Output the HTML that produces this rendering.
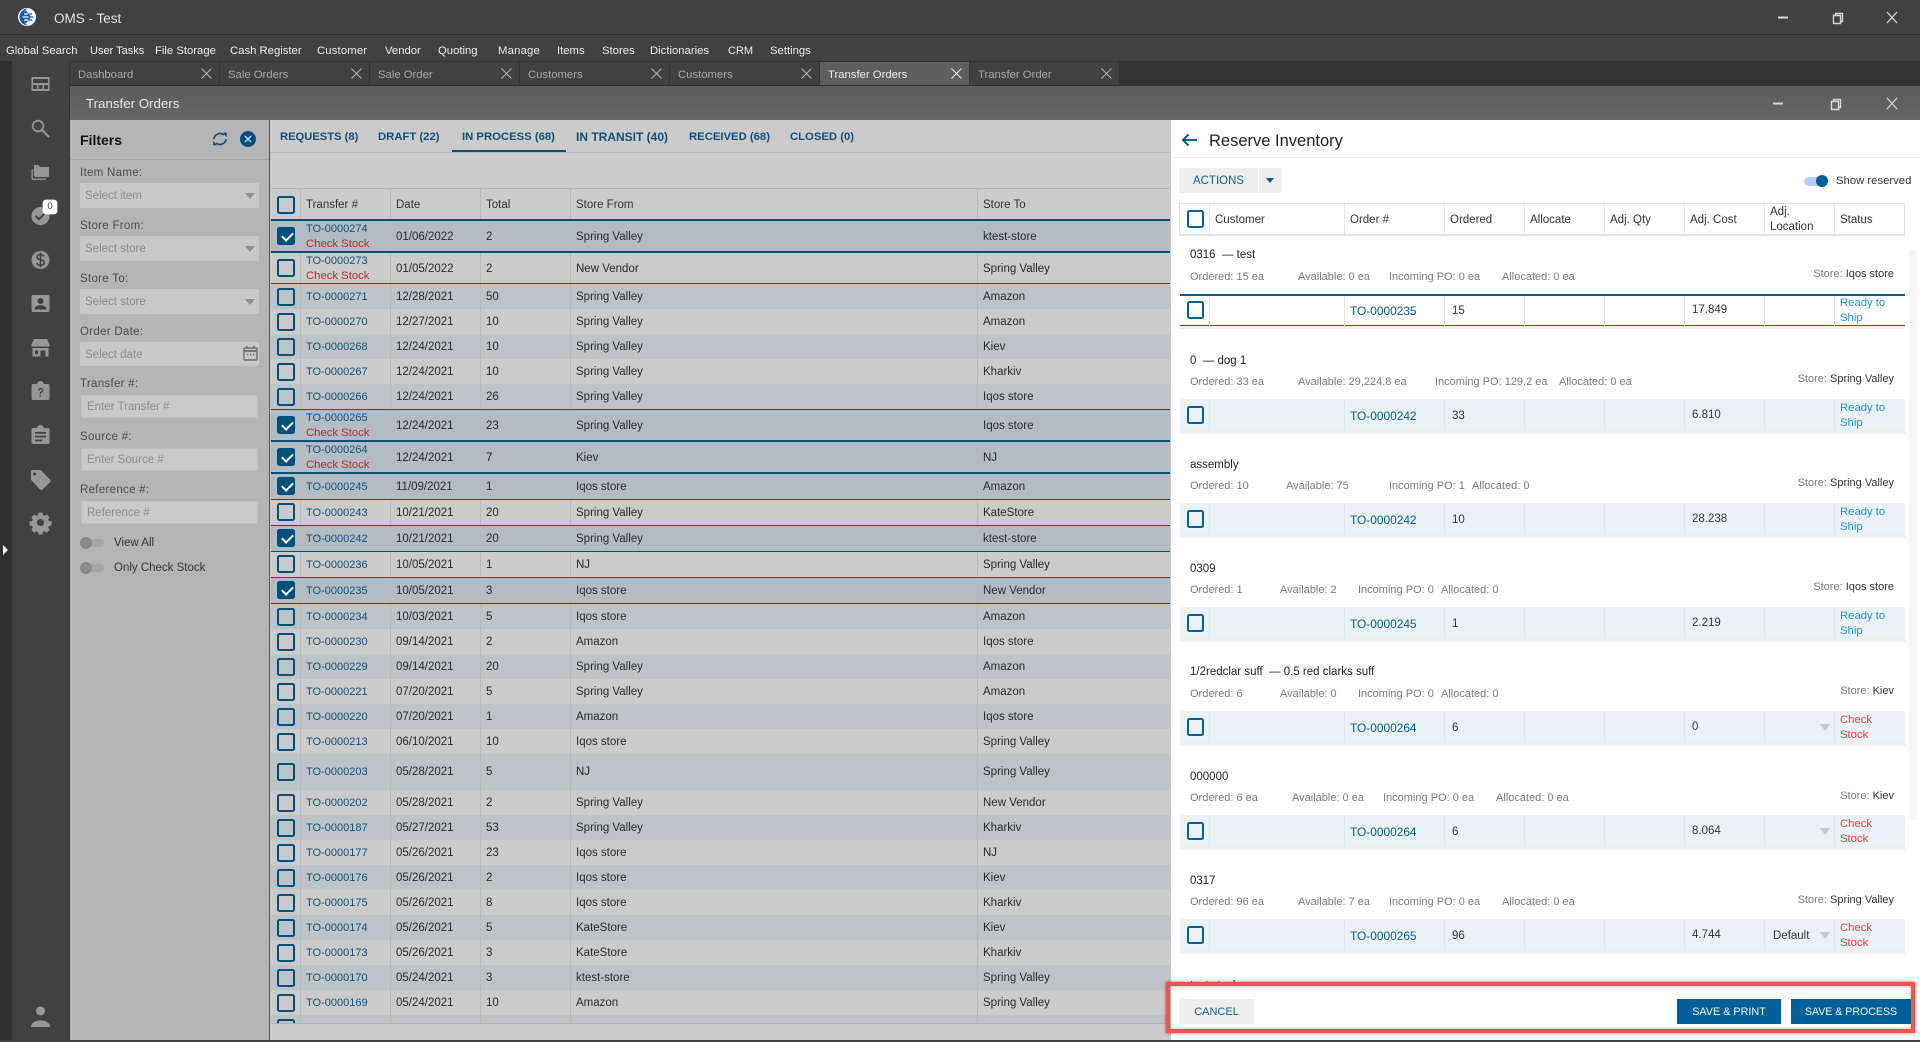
<!DOCTYPE html>
<html><head><meta charset="utf-8"><title>OMS - Test</title>
<style>
*{box-sizing:border-box}
html,body{margin:0;padding:0;width:1920px;height:1040px;overflow:hidden;background:#414141;font-family:"Liberation Sans",sans-serif;font-size:11.5px;color:#222}
.p{position:absolute;white-space:nowrap}
.m{position:absolute;top:43px;line-height:16px;font-size:11.3px;color:#eee;white-space:nowrap}
.t{position:absolute;top:62px;height:23px;width:149px;background:#414141;color:#a8a8a8;font-size:11.3px;line-height:26px;padding-left:8px}
.t svg{position:absolute;right:7px;top:6px}
.lb{position:absolute;left:80px;font-size:11.5px;color:#4c4c4c;line-height:14px;letter-spacing:.3px;margin-top:1px}
.in{position:absolute;left:80px;width:179px;background:#c8c8c8;border-radius:2px;color:#8c8c8c;font-size:11.5px;padding-left:5px;padding-top:1px}
.in.b{left:81px;width:177px;border:1px solid #c0c0c0;background:#c9c9c9;color:#8e8e8e;padding-top:1px}
.ar{position:absolute;right:4px;top:10px;width:0;height:0;border:5px solid transparent;border-top:6px solid #8f8f8f;border-bottom:0}
.tb{position:absolute;top:130px;font-weight:bold;font-size:11.3px;color:#134f78;line-height:14px;white-space:nowrap}
.r{position:absolute;left:271px;width:899px}
.r span{position:absolute;top:1px;white-space:nowrap}
.bl{background:#bdc4c7}.li{background:#cbcbcb}.se{background:#b3bcc3}
.c{left:35px;color:#134f78;font-size:11px}
.d{left:125px;color:#2a2a2a}.o{left:215px;color:#2a2a2a}.f{left:305px;color:#2a2a2a}.g{left:712px;color:#2a2a2a}
.cs{color:#b5302b;font-size:11.3px}
.cb{position:absolute;left:6px;width:18px;height:18px;border:2px solid #00507f;border-radius:2.5px}
.on{background:#00507f}
.on::after{content:"";position:absolute;left:4.5px;top:1px;width:5px;height:9px;border:solid #fff;border-width:0 2px 2px 0;transform:rotate(45deg)}
.ln{position:absolute;left:271px;width:899px;background:#00507f}
.v{position:absolute;width:1px;background:#b9b9b9}
.th{position:absolute;top:198px;color:#333;font-size:11.5px;line-height:14px;white-space:nowrap}
.rw{position:absolute;left:1180px;width:725px;height:31px;background:#ebf2f5;border-bottom:0}
.st{position:absolute;left:1180px;width:725px;height:4px;background:#eeeeee}
.cbr{position:absolute;left:1187px;width:17px;height:18px;border:2px solid #00609a;border-radius:2.5px}
.vr{position:absolute;width:1px;height:31px;background:#dfe7ea}
.lk{position:absolute;left:1350px;color:#005b8e;font-size:11.9px;line-height:16px;margin-top:1px}
.q{position:absolute;left:1452px;color:#333;line-height:16px;margin-top:1px}
.co{position:absolute;color:#333;left:1692px;line-height:16px;margin-top:1px}
.sta{position:absolute;left:1840px;line-height:15px;font-size:11.3px;white-space:nowrap;margin-top:1px}
.ti{position:absolute;left:1190px;color:#222;line-height:16px;white-space:nowrap;font-size:11.5px;margin-top:1px}
.su{position:absolute;color:#7a7a7a;line-height:16px;white-space:nowrap;font-size:11px;margin-top:1px}
.so{position:absolute;right:26px;color:#7a7a7a;line-height:16px;white-space:nowrap;font-size:11px;text-align:right;margin-top:1px}
.so em{font-style:normal;color:#333}
.tri{position:absolute;left:1820px;width:0;height:0;border:5px solid transparent;border-top:7px solid #c4c9cc;border-bottom:0}
</style></head><body>

<!-- title bar -->
<div style="position:absolute;left:0;top:0;width:1920px;height:34px;background:#414141"></div>
<div style="position:absolute;left:0;top:34px;width:1920px;height:1px;background:#2f2f2f"></div>
<svg style="position:absolute;left:17px;top:7px" width="20" height="20" viewBox="0 0 20 20"><circle cx="10" cy="10" r="9" fill="#fff"/><path d="M11 1.500A8.500 8.500 0 1 0 11 18.500C8 17.500 6.500 14 6.500 10S8 2.500 11 1.500z" fill="#0b5fa5"/><path d="M9 3.500A8 8 0 0 0 9 16.500L14 10z" fill="#0b5fa5"/><path d="M7 7h4M5.500 10h6M7 13h4" stroke="#fff" stroke-width="1.300"/><path d="M11 7h4M11.500 10h5M11 13h4" stroke="#0b5fa5" stroke-width="1.300"/></svg>
<div class="p" style="left:54px;top:10px;font-size:13.500px;color:#e2e2e2;line-height:18px">OMS - Test</div>
<svg style="position:absolute;left:1776px;top:10px" width="126" height="16" viewBox="0 0 126 16" fill="none" stroke="#d8d8d8"><path d="M2 7.500h10" stroke-width="2"/><path d="M57.500 5.500h7v8h-7zM59.500 5.500v-2h7v8h-2" stroke-width="1.400"/><path d="M111 2l10 11M121 2l-10 11" stroke-width="1.300"/></svg>

<!-- menu -->
<span class="m" style="left:6px">Global Search</span>
<span class="m" style="left:90px;font-size:11px">User Tasks</span>
<span class="m" style="left:155px">File Storage</span>
<span class="m" style="left:230px">Cash Register</span>
<span class="m" style="left:317px;letter-spacing:.15px">Customer</span>
<span class="m" style="left:385px">Vendor</span>
<span class="m" style="left:438px">Quoting</span>
<span class="m" style="left:498px;letter-spacing:.2px">Manage</span>
<span class="m" style="left:557px">Items</span>
<span class="m" style="left:602px">Stores</span>
<span class="m" style="left:650px">Dictionaries</span>
<span class="m" style="left:728px;font-size:11px">CRM</span>
<span class="m" style="left:770px">Settings</span>

<!-- tab strip -->
<div style="position:absolute;left:0;top:61px;width:1920px;height:25px;background:#333"></div>
<div class="t" style="left:70px">Dashboard<svg width="11" height="11" viewBox="0 0 11 11" stroke="#b5b5b5" fill="none"><path d="M.5.500l10 10M10.500.500l-10 10"/></svg></div>
<div class="t" style="left:220px">Sale Orders<svg width="11" height="11" viewBox="0 0 11 11" stroke="#b5b5b5" fill="none"><path d="M.5.500l10 10M10.500.500l-10 10"/></svg></div>
<div class="t" style="left:370px">Sale Order<svg width="11" height="11" viewBox="0 0 11 11" stroke="#b5b5b5" fill="none"><path d="M.5.500l10 10M10.500.500l-10 10"/></svg></div>
<div class="t" style="left:520px">Customers<svg width="11" height="11" viewBox="0 0 11 11" stroke="#b5b5b5" fill="none"><path d="M.5.500l10 10M10.500.500l-10 10"/></svg></div>
<div class="t" style="left:670px">Customers<svg width="11" height="11" viewBox="0 0 11 11" stroke="#b5b5b5" fill="none"><path d="M.5.500l10 10M10.500.500l-10 10"/></svg></div>
<div class="t" style="left:820px;background:#5e5e5e;color:#efefef">Transfer Orders<svg width="11" height="11" viewBox="0 0 11 11" stroke="#eee" fill="none"><path d="M.5.500l10 10M10.500.500l-10 10"/></svg></div>
<div class="t" style="left:970px">Transfer Order<svg width="11" height="11" viewBox="0 0 11 11" stroke="#b5b5b5" fill="none"><path d="M.5.500l10 10M10.500.500l-10 10"/></svg></div>

<!-- left nav -->
<div style="position:absolute;left:0;top:61px;width:12px;height:979px;background:#2f2f2f"></div>
<div style="position:absolute;left:12px;top:61px;width:58px;height:979px;background:#414141;border-right:1px solid #343434"></div>
<div style="position:absolute;left:3px;top:545px;width:0;height:0;border:5px solid transparent;border-left:5px solid #fff;border-right:0"></div>
<svg style="position:absolute;left:12px;top:62px" width="58" height="980" viewBox="0 0 58 980" fill="#969696">
<path fill-rule="evenodd" d="M19.500 15h18v14h-18zM21 17v4h15v-4zM21 23v4h4v-4zM26.500 23v4h4v-4zM32 23v4h4v-4z"/>
<g transform="translate(0,-1)"><circle cx="26" cy="65" r="5.300" fill="none" stroke="#969696" stroke-width="1.800"/><path d="M30 69l7 7" stroke="#969696" stroke-width="2.200"/></g>
<path transform="translate(0,-1)" d="M22 104h4l2 2h9v9a1 1 0 0 1-1 1H23a1 1 0 0 1-1-1zM19.500 108h1.300v9.500H34v1.400H21a1.500 1.500 0 0 1-1.500-1.500z"/>
<circle cx="28.500" cy="154" r="9"/><path d="M23.800 154l3.200 3.200 6-6" fill="none" stroke="#414141" stroke-width="2"/>
<circle cx="28.500" cy="198" r="9"/><path d="M32 194.500c-.5-1.200-2-2-3.500-2-2 0-3.500 1-3.500 2.600 0 3.400 7.300 1.900 7.300 5.600 0 1.600-1.600 2.600-3.700 2.600-1.700 0-3.300-.8-3.800-2.200M28.500 190.500v15" fill="none" stroke="#414141" stroke-width="1.500"/>
<path fill-rule="evenodd" d="M21 233h15a1.500 1.500 0 0 1 1.500 1.500v14a1.500 1.500 0 0 1-1.500 1.500H21a1.500 1.500 0 0 1-1.500-1.500v-14A1.500 1.500 0 0 1 21 233zM28.500 236a3 3 0 1 0 0 6 3 3 0 0 0 0-6zM22.500 247.500h12c0-3-3-4.200-6-4.200s-6 1.200-6 4.200z"/>
<path transform="translate(0,-1)" fill-rule="evenodd" d="M22 278h13l2.500 5.500v2H19.500v-2zM20.500 287h16v8.500h-3v-6h-5v6h-8zM23 289.500v3.500h3v-3.500z"/>
<path transform="translate(0,-3)" fill-rule="evenodd" d="M21 325h4c.4-2 2-3 3.500-3s3.100 1 3.500 3h4a1.500 1.500 0 0 1 1.500 1.500v13a1.500 1.500 0 0 1-1.500 1.500H21a1.500 1.500 0 0 1-1.500-1.500v-13A1.500 1.500 0 0 1 21 325zM26 331.500c0-3.200 5.200-3.400 5.200-.2 0 2-2.200 2-2.200 3.700h-1.300c0-2.500 2.200-2.500 2.200-3.700 0-1.400-2.600-1.300-2.600.2zM27.600 336h1.400v1.600h-1.400z"/>
<path transform="translate(0,-3)" fill-rule="evenodd" d="M21 369h4c.4-2 2-3 3.500-3s3.100 1 3.500 3h4a1.500 1.500 0 0 1 1.500 1.500v13a1.500 1.500 0 0 1-1.500 1.500H21a1.500 1.500 0 0 1-1.500-1.500v-13A1.500 1.500 0 0 1 21 369zM23 373v1.700h11V373zM23 376.800v1.700h11v-1.700zM23 380.600v1.700h7v-1.700z"/>
<path fill-rule="evenodd" d="M20 408h8a2 2 0 0 1 1.500.6l8.500 9a2 2 0 0 1 0 2.800l-7.400 7a2 2 0 0 1-2.800 0l-8.300-9a2 2 0 0 1-.5-1.400v-7.500a1.500 1.500 0 0 1 1-1.500zM22.500 410.500a1.500 1.500 0 1 0 0 3 1.500 1.500 0 0 0 0-3z"/>
<path transform="translate(0,-2)" fill-rule="evenodd" d="M26.500 452.500h4l.5 2.600 1.500.7 2.300-1.400 2.800 2.800-1.400 2.300.6 1.500 2.700.5v4l-2.700.6-.6 1.400 1.400 2.400-2.800 2.800-2.300-1.500-1.500.7-.5 2.600h-4l-.5-2.600-1.500-.7-2.300 1.500-2.800-2.800 1.400-2.400-.6-1.400-2.700-.6v-4l2.700-.5.6-1.500-1.400-2.300 2.800-2.800 2.300 1.400 1.500-.7zM28.500 459a3.500 3.500 0 1 0 0 7 3.500 3.500 0 0 0 0-7z"/>
<circle cx="28.500" cy="949" r="4.500"/><path d="M19 965c0-4.500 4.500-6.500 9.500-6.500s9.500 2 9.500 6.500z"/>
</svg>
<div style="position:absolute;left:43px;top:200px;width:14px;height:14px;background:#fff;border-radius:3px;font-size:9.500px;line-height:14px;text-align:center;color:#333;box-shadow:0 0 0 .5px #ccc"><span>0</span></div>

<!-- transfer orders window header -->
<div style="position:absolute;left:70px;top:86px;width:1850px;height:34px;background:linear-gradient(#5c5c5c,#666)"></div>
<div class="p" style="left:86px;top:95px;font-size:13.300px;color:#e8e8e8;line-height:18px">Transfer Orders</div>
<svg style="position:absolute;left:1771px;top:96px" width="131" height="16" viewBox="0 0 131 16" fill="none" stroke="#d8d8d8"><path d="M2 7.500h10" stroke-width="2"/><path d="M60.500 5.500h7v8h-7zM62.500 5.500v-2h7v8h-2" stroke-width="1.400"/><path d="M116 2l10 11M126 2l-10 11" stroke-width="1.300"/></svg>

<!-- Filters -->
<div style="position:absolute;left:70px;top:120px;width:199px;height:920px;background:#b5b5b5"></div>
<div style="position:absolute;left:269px;top:120px;width:1px;height:920px;background:#555"></div>
<div style="position:absolute;left:70px;top:159px;width:199px;height:1px;background:#a4a4a4"></div>
<div class="p" style="left:80px;top:131px;font-size:14px;font-weight:bold;color:#111;line-height:18px">Filters</div>
<svg style="position:absolute;left:211px;top:130px" width="18" height="18" viewBox="0 0 18 18" fill="none" stroke="#0c5585" stroke-width="1.700"><path d="M3 9a6 5.500 0 0 1 10-4"/><path d="M15 9a6 5.500 0 0 1-10 4"/><path d="M12 2.500l4 .3-.5 4.400z" fill="#0c5585" stroke="none"/><path d="M6 15.500l-4-.3.500-4.400z" fill="#0c5585" stroke="none"/></svg>
<div style="position:absolute;left:240px;top:131px;width:16px;height:16px;border-radius:50%;background:#00507f"><svg width="16" height="16" viewBox="0 0 16 16" fill="none" stroke="#d8d8d8" stroke-width="1.400" style="display:block"><path d="M5 5l6 6M11 5l-6 6"/></svg></div>

<div class="lb" style="top:165px">Item Name:</div>
<div class="in" style="top:183px;height:25px;line-height:25px">Select item<i class="ar"></i></div>
<div class="lb" style="top:218px">Store From:</div>
<div class="in" style="top:236px;height:25px;line-height:25px">Select store<i class="ar"></i></div>
<div class="lb" style="top:271px">Store To:</div>
<div class="in" style="top:289px;height:25px;line-height:25px">Select store<i class="ar"></i></div>
<div class="lb" style="top:324px">Order Date:</div>
<div class="in" style="top:342px;height:24px;line-height:24px">Select date
<svg style="position:absolute;right:1px;top:3px" width="15" height="16" viewBox="0 0 15 16" fill="none" stroke="#6e6e6e" stroke-width="1.400"><rect x="1" y="3" width="13" height="12" rx="1"/><path d="M1 6h13" stroke-width="1.800"/><path d="M4 1v2M11 1v2M4 9.500h1.500M7 9.500h1.500M10 9.500h1.500"/></svg></div>
<div class="lb" style="top:376px">Transfer #:</div>
<div class="in b" style="top:395px;height:23px;line-height:21px">Enter Transfer #</div>
<div class="lb" style="top:429px">Source #:</div>
<div class="in b" style="top:448px;height:23px;line-height:21px">Enter Source #</div>
<div class="lb" style="top:482px">Reference #:</div>
<div class="in b" style="top:501px;height:23px;line-height:21px">Reference #</div>
<div style="position:absolute;left:80px;top:539px;width:24px;height:8px;border-radius:4px;background:#a6a6a6"></div>
<div style="position:absolute;left:80px;top:537px;width:12px;height:12px;border-radius:50%;background:#8a8a8a"></div>
<div class="p" style="left:114px;top:535px;line-height:16px;color:#333">View All</div>
<div style="position:absolute;left:80px;top:564px;width:24px;height:8px;border-radius:4px;background:#a6a6a6"></div>
<div style="position:absolute;left:80px;top:562px;width:12px;height:12px;border-radius:50%;background:#8a8a8a"></div>
<div class="p" style="left:114px;top:560px;line-height:16px;color:#333">Only Check Stock</div>

<!-- Grid -->
<div style="position:absolute;left:270px;top:120px;width:901px;height:920px;background:#cbcbcb"></div>
<div style="position:absolute;left:270px;top:152px;width:901px;height:1px;background:#b9b9b9"></div>
<div style="position:absolute;left:452px;top:150px;width:114px;height:2px;background:#00507f"></div>
<span class="tb" style="left:280px;font-size:11.2px">REQUESTS (8)</span>
<span class="tb" style="left:378px">DRAFT (22)</span>
<span class="tb" style="left:462px">IN PROCESS (68)</span>
<span class="tb" style="left:576px;font-size:12px">IN TRANSIT (40)</span>
<span class="tb" style="left:689px">RECEIVED (68)</span>
<span class="tb" style="left:790px">CLOSED (0)</span>

<div style="position:absolute;left:271px;top:188px;width:899px;height:1px;background:#b4b4b4"></div>
<i class="cb" style="left:277px;top:196px"></i>
<span class="th" style="left:306px">Transfer #</span>
<span class="th" style="left:396px">Date</span>
<span class="th" style="left:486px">Total</span>
<span class="th" style="left:576px">Store From</span>
<span class="th" style="left:983px">Store To</span>

<div class="r se" style="top:220px;height:32px;line-height:32px"><i class="cb on" style="top:7px"></i><span class="c" style="top:2px;line-height:15px">TO-0000274</span><span class="c cs" style="top:17px;line-height:15px">Check Stock</span><span class="d">01/06/2022</span><span class="o">2</span><span class="f">Spring Valley</span><span class="g">ktest-store</span></div>
<div class="r li" style="top:252px;height:32px;line-height:32px"><i class="cb" style="top:7px"></i><span class="c" style="top:2px;line-height:15px">TO-0000273</span><span class="c cs" style="top:17px;line-height:15px">Check Stock</span><span class="d">01/05/2022</span><span class="o">2</span><span class="f">New Vendor</span><span class="g">Spring Valley</span></div>
<div class="r bl" style="top:284px;height:25px;line-height:25px"><i class="cb" style="top:4px"></i><span class="c">TO-0000271</span><span class="d">12/28/2021</span><span class="o">50</span><span class="f">Spring Valley</span><span class="g">Amazon</span></div>
<div class="r li" style="top:309px;height:25px;line-height:25px"><i class="cb" style="top:4px"></i><span class="c">TO-0000270</span><span class="d">12/27/2021</span><span class="o">10</span><span class="f">Spring Valley</span><span class="g">Amazon</span></div>
<div class="r bl" style="top:334px;height:25px;line-height:25px"><i class="cb" style="top:4px"></i><span class="c">TO-0000268</span><span class="d">12/24/2021</span><span class="o">10</span><span class="f">Spring Valley</span><span class="g">Kiev</span></div>
<div class="r li" style="top:359px;height:25px;line-height:25px"><i class="cb" style="top:4px"></i><span class="c">TO-0000267</span><span class="d">12/24/2021</span><span class="o">10</span><span class="f">Spring Valley</span><span class="g">Kharkiv</span></div>
<div class="r bl" style="top:384px;height:25px;line-height:25px"><i class="cb" style="top:4px"></i><span class="c">TO-0000266</span><span class="d">12/24/2021</span><span class="o">26</span><span class="f">Spring Valley</span><span class="g">Iqos store</span></div>
<div class="r se" style="top:409px;height:32px;line-height:32px"><i class="cb on" style="top:7px"></i><span class="c" style="top:2px;line-height:15px">TO-0000265</span><span class="c cs" style="top:17px;line-height:15px">Check Stock</span><span class="d">12/24/2021</span><span class="o">23</span><span class="f">Spring Valley</span><span class="g">Iqos store</span></div>
<div class="r se" style="top:441px;height:32px;line-height:32px"><i class="cb on" style="top:7px"></i><span class="c" style="top:2px;line-height:15px">TO-0000264</span><span class="c cs" style="top:17px;line-height:15px">Check Stock</span><span class="d">12/24/2021</span><span class="o">7</span><span class="f">Kiev</span><span class="g">NJ</span></div>
<div class="r se" style="top:473px;height:26px;line-height:26px"><i class="cb on" style="top:4px"></i><span class="c">TO-0000245</span><span class="d">11/09/2021</span><span class="o">1</span><span class="f">Iqos store</span><span class="g">Amazon</span></div>
<div class="r li" style="top:499px;height:26px;line-height:26px"><i class="cb" style="top:4px"></i><span class="c">TO-0000243</span><span class="d">10/21/2021</span><span class="o">20</span><span class="f">Spring Valley</span><span class="g">KateStore</span></div>
<div class="r se" style="top:525px;height:26px;line-height:26px"><i class="cb on" style="top:4px"></i><span class="c">TO-0000242</span><span class="d">10/21/2021</span><span class="o">20</span><span class="f">Spring Valley</span><span class="g">ktest-store</span></div>
<div class="r li" style="top:551px;height:26px;line-height:26px"><i class="cb" style="top:4px"></i><span class="c">TO-0000236</span><span class="d">10/05/2021</span><span class="o">1</span><span class="f">NJ</span><span class="g">Spring Valley</span></div>
<div class="r se" style="top:577px;height:26px;line-height:26px"><i class="cb on" style="top:4px"></i><span class="c">TO-0000235</span><span class="d">10/05/2021</span><span class="o">3</span><span class="f">Iqos store</span><span class="g">New Vendor</span></div>
<div class="r bl" style="top:603px;height:26px;line-height:26px"><i class="cb" style="top:5px"></i><span class="c">TO-0000234</span><span class="d">10/03/2021</span><span class="o">5</span><span class="f">Iqos store</span><span class="g">Amazon</span></div>
<div class="r li" style="top:629px;height:25px;line-height:25px"><i class="cb" style="top:4px"></i><span class="c">TO-0000230</span><span class="d">09/14/2021</span><span class="o">2</span><span class="f">Amazon</span><span class="g">Iqos store</span></div>
<div class="r bl" style="top:654px;height:25px;line-height:25px"><i class="cb" style="top:4px"></i><span class="c">TO-0000229</span><span class="d">09/14/2021</span><span class="o">20</span><span class="f">Spring Valley</span><span class="g">Amazon</span></div>
<div class="r li" style="top:679px;height:25px;line-height:25px"><i class="cb" style="top:4px"></i><span class="c">TO-0000221</span><span class="d">07/20/2021</span><span class="o">5</span><span class="f">Spring Valley</span><span class="g">Amazon</span></div>
<div class="r bl" style="top:704px;height:25px;line-height:25px"><i class="cb" style="top:4px"></i><span class="c">TO-0000220</span><span class="d">07/20/2021</span><span class="o">1</span><span class="f">Amazon</span><span class="g">Iqos store</span></div>
<div class="r li" style="top:729px;height:25px;line-height:25px"><i class="cb" style="top:4px"></i><span class="c">TO-0000213</span><span class="d">06/10/2021</span><span class="o">10</span><span class="f">Iqos store</span><span class="g">Spring Valley</span></div>
<div class="r bl" style="top:754px;height:36px;line-height:36px"><i class="cb" style="top:9px"></i><span class="c" style="top:0">TO-0000203</span><span class="d" style="top:0">05/28/2021</span><span class="o" style="top:0">5</span><span class="f" style="top:0">NJ</span><span class="g" style="top:0">Spring Valley</span></div>
<div class="r li" style="top:790px;height:25px;line-height:25px"><i class="cb" style="top:4px"></i><span class="c">TO-0000202</span><span class="d">05/28/2021</span><span class="o">2</span><span class="f">Spring Valley</span><span class="g">New Vendor</span></div>
<div class="r bl" style="top:815px;height:25px;line-height:25px"><i class="cb" style="top:4px"></i><span class="c">TO-0000187</span><span class="d">05/27/2021</span><span class="o">53</span><span class="f">Spring Valley</span><span class="g">Kharkiv</span></div>
<div class="r li" style="top:840px;height:25px;line-height:25px"><i class="cb" style="top:4px"></i><span class="c">TO-0000177</span><span class="d">05/26/2021</span><span class="o">23</span><span class="f">Iqos store</span><span class="g">NJ</span></div>
<div class="r bl" style="top:865px;height:25px;line-height:25px"><i class="cb" style="top:4px"></i><span class="c">TO-0000176</span><span class="d">05/26/2021</span><span class="o">2</span><span class="f">Iqos store</span><span class="g">Kiev</span></div>
<div class="r li" style="top:890px;height:25px;line-height:25px"><i class="cb" style="top:4px"></i><span class="c">TO-0000175</span><span class="d">05/26/2021</span><span class="o">8</span><span class="f">Iqos store</span><span class="g">Kharkiv</span></div>
<div class="r bl" style="top:915px;height:25px;line-height:25px"><i class="cb" style="top:4px"></i><span class="c">TO-0000174</span><span class="d">05/26/2021</span><span class="o">5</span><span class="f">KateStore</span><span class="g">Kiev</span></div>
<div class="r li" style="top:940px;height:25px;line-height:25px"><i class="cb" style="top:4px"></i><span class="c">TO-0000173</span><span class="d">05/26/2021</span><span class="o">3</span><span class="f">KateStore</span><span class="g">Kharkiv</span></div>
<div class="r bl" style="top:965px;height:25px;line-height:25px"><i class="cb" style="top:4px"></i><span class="c">TO-0000170</span><span class="d">05/24/2021</span><span class="o">3</span><span class="f">ktest-store</span><span class="g">Spring Valley</span></div>
<div class="r li" style="top:990px;height:25px;line-height:25px"><i class="cb" style="top:4px"></i><span class="c">TO-0000169</span><span class="d">05/24/2021</span><span class="o">10</span><span class="f">Amazon</span><span class="g">Spring Valley</span></div>
<div class="r bl" style="top:1015px;height:8px;overflow:hidden"><i class="cb" style="top:4px"></i></div>
<div style="position:absolute;left:271px;top:1023px;width:899px;height:1px;background:#b4b4b4"></div>

<div class="v" style="left:300px;top:188px;height:835px"></div>
<div class="v" style="left:390px;top:188px;height:835px"></div>
<div class="v" style="left:480px;top:188px;height:835px"></div>
<div class="v" style="left:570px;top:188px;height:835px"></div>
<div class="v" style="left:977px;top:188px;height:835px"></div>

<div class="ln" style="top:219px;height:2px"></div>
<div class="ln" style="top:251px;height:2px"></div>
<div class="ln" style="top:283px;height:1px"></div>
<div class="ln" style="top:409px;height:1px"></div>
<div class="ln" style="top:440px;height:2px"></div>
<div class="ln" style="top:472px;height:2px"></div>
<div class="ln" style="top:499px;height:1px"></div>
<div class="ln" style="top:525px;height:1px"></div>
<div class="ln" style="top:551px;height:1px"></div>
<div class="ln" style="top:577px;height:1px"></div>
<div class="ln" style="top:603px;height:1px"></div>

<!-- Reserve Inventory panel -->
<div style="position:absolute;left:1171px;top:120px;width:749px;height:920px;background:#fff;overflow:hidden"></div>
<div style="position:absolute;left:1171px;top:157px;width:749px;height:1px;background:#ececec"></div>
<svg style="position:absolute;left:1180px;top:132px" width="18" height="16" viewBox="0 0 18 16" fill="none" stroke="#005b8e" stroke-width="2"><path d="M17 8H3M8.500 2.500L3 8l5.500 5.500"/></svg>
<div class="p" style="left:1209px;top:131px;font-size:16.500px;line-height:20px;color:#222">Reserve Inventory</div>
<div style="position:absolute;left:1179px;top:168px;width:79px;height:25px;background:#eeeeee;color:#0e5f90;font-size:11.500px;line-height:27px;text-align:center">ACTIONS</div>
<div style="position:absolute;left:1259px;top:168px;width:22px;height:25px;background:#eeeeee"><i style="position:absolute;left:7px;top:10px;width:0;height:0;border:4px solid transparent;border-top:5px solid #0e5f90;border-bottom:0"></i></div>
<div style="position:absolute;left:1804px;top:177px;width:22px;height:9px;border-radius:5px;background:#b7cdf5"></div>
<div style="position:absolute;left:1816px;top:175px;width:12px;height:12px;border-radius:50%;background:#00609a"></div>
<div class="p" style="left:1836px;top:173px;line-height:16px;color:#333;font-size:11.300px">Show reserved</div>

<div style="position:absolute;left:1179px;top:203px;width:726px;height:32px;border:1px solid #dedede;border-left:1px solid #dedede"></div>
<div style="position:absolute;left:1179px;top:234px;width:726px;height:2px;background:#e4e4e4"></div>
<div class="cbr" style="top:210px"></div>
<div class="vr" style="left:1209px;top:204px;background:#e4e4e4"></div><div class="vr" style="left:1344px;top:204px;background:#e4e4e4"></div><div class="vr" style="left:1444px;top:204px;background:#e4e4e4"></div><div class="vr" style="left:1524px;top:204px;background:#e4e4e4"></div><div class="vr" style="left:1604px;top:204px;background:#e4e4e4"></div><div class="vr" style="left:1684px;top:204px;background:#e4e4e4"></div><div class="vr" style="left:1764px;top:204px;background:#e4e4e4"></div><div class="vr" style="left:1834px;top:204px;background:#e4e4e4"></div>
<span class="th" style="top:213px;left:1215px">Customer</span>
<span class="th" style="top:213px;left:1350px">Order #</span>
<span class="th" style="top:213px;left:1450px">Ordered</span>
<span class="th" style="top:213px;left:1530px">Allocate</span>
<span class="th" style="top:213px;left:1610px">Adj. Qty</span>
<span class="th" style="top:213px;left:1690px">Adj. Cost</span>
<span class="th" style="top:205px;left:1770px;line-height:15px">Adj.<br>Location</span>
<span class="th" style="top:213px;left:1840px">Status</span>

<!-- scrollbar hints -->
<div style="position:absolute;left:1909px;top:250px;width:8px;height:570px;background:#f6f6f6"></div>

<!-- group 1 -->
<span class="ti" style="top:246px">0316 &nbsp;— test</span>
<span class="su" style="top:268px;left:1190px">Ordered: 15 ea</span><span class="su" style="top:268px;left:1298px">Available: 0 ea</span><span class="su" style="top:268px;left:1389px">Incoming PO: 0 ea</span><span class="su" style="top:268px;left:1502px">Allocated: 0 ea</span>
<span class="so" style="top:265px">Store: <em>Iqos store</em></span>
<div class="rw" style="top:294px;background:#fff;border-top:2px solid #00609a;border-bottom:2px solid #00609a;height:33px"></div><div class="st" style="top:326px;height:3px"></div>
<div class="cbr" style="top:301px"></div>
<div class="vr" style="left:1209px;top:296px"></div><div class="vr" style="left:1344px;top:296px"></div><div class="vr" style="left:1444px;top:296px"></div><div class="vr" style="left:1524px;top:296px"></div><div class="vr" style="left:1604px;top:296px"></div><div class="vr" style="left:1684px;top:296px"></div><div class="vr" style="left:1764px;top:296px"></div><div class="vr" style="left:1834px;top:296px"></div>
<span class="lk" style="top:302px">TO-0000235</span><span class="q" style="top:302px">15</span><span class="co" style="top:301px">17.849</span>
<span class="sta" style="top:295px;color:#1a8fdf">Ready to<br>Ship</span>

<!-- group 2 -->
<span class="ti" style="top:352px">0 &nbsp;— dog 1</span>
<span class="su" style="top:373px;left:1190px">Ordered: 33 ea</span><span class="su" style="top:373px;left:1298px">Available: 29,224.8 ea</span><span class="su" style="top:373px;left:1435px">Incoming PO: 129.2 ea</span><span class="su" style="top:373px;left:1559px">Allocated: 0 ea</span>
<span class="so" style="top:370px">Store: <em>Spring Valley</em></span>
<div class="rw" style="top:399px"></div><div class="st" style="top:430px"></div>
<div class="cbr" style="top:406px"></div>
<div class="vr" style="left:1209px;top:399px"></div><div class="vr" style="left:1344px;top:399px"></div><div class="vr" style="left:1444px;top:399px"></div><div class="vr" style="left:1524px;top:399px"></div><div class="vr" style="left:1604px;top:399px"></div><div class="vr" style="left:1684px;top:399px"></div><div class="vr" style="left:1764px;top:399px"></div><div class="vr" style="left:1834px;top:399px"></div>
<span class="lk" style="top:407px">TO-0000242</span><span class="q" style="top:407px">33</span><span class="co" style="top:406px">6.810</span>
<span class="sta" style="top:400px;color:#1a8fdf">Ready to<br>Ship</span>

<!-- group 3 -->
<span class="ti" style="top:456px">assembly</span>
<span class="su" style="top:477px;left:1190px">Ordered: 10</span><span class="su" style="top:477px;left:1286px">Available: 75</span><span class="su" style="top:477px;left:1389px">Incoming PO: 1</span><span class="su" style="top:477px;left:1472px">Allocated: 0</span>
<span class="so" style="top:474px">Store: <em>Spring Valley</em></span>
<div class="rw" style="top:503px"></div><div class="st" style="top:534px"></div>
<div class="cbr" style="top:510px"></div>
<div class="vr" style="left:1209px;top:503px"></div><div class="vr" style="left:1344px;top:503px"></div><div class="vr" style="left:1444px;top:503px"></div><div class="vr" style="left:1524px;top:503px"></div><div class="vr" style="left:1604px;top:503px"></div><div class="vr" style="left:1684px;top:503px"></div><div class="vr" style="left:1764px;top:503px"></div><div class="vr" style="left:1834px;top:503px"></div>
<span class="lk" style="top:511px">TO-0000242</span><span class="q" style="top:511px">10</span><span class="co" style="top:510px">28.238</span>
<span class="sta" style="top:504px;color:#1a8fdf">Ready to<br>Ship</span>

<!-- group 4 -->
<span class="ti" style="top:560px">0309</span>
<span class="su" style="top:581px;left:1190px">Ordered: 1</span><span class="su" style="top:581px;left:1280px">Available: 2</span><span class="su" style="top:581px;left:1358px">Incoming PO: 0</span><span class="su" style="top:581px;left:1441px">Allocated: 0</span>
<span class="so" style="top:578px">Store: <em>Iqos store</em></span>
<div class="rw" style="top:607px"></div><div class="st" style="top:638px"></div>
<div class="cbr" style="top:614px"></div>
<div class="vr" style="left:1209px;top:607px"></div><div class="vr" style="left:1344px;top:607px"></div><div class="vr" style="left:1444px;top:607px"></div><div class="vr" style="left:1524px;top:607px"></div><div class="vr" style="left:1604px;top:607px"></div><div class="vr" style="left:1684px;top:607px"></div><div class="vr" style="left:1764px;top:607px"></div><div class="vr" style="left:1834px;top:607px"></div>
<span class="lk" style="top:615px">TO-0000245</span><span class="q" style="top:615px">1</span><span class="co" style="top:614px">2.219</span>
<span class="sta" style="top:608px;color:#1a8fdf">Ready to<br>Ship</span>

<!-- group 5 -->
<span class="ti" style="top:663px">1/2redclar suff &nbsp;— 0.5 red clarks suff</span>
<span class="su" style="top:685px;left:1190px">Ordered: 6</span><span class="su" style="top:685px;left:1280px">Available: 0</span><span class="su" style="top:685px;left:1358px">Incoming PO: 0</span><span class="su" style="top:685px;left:1441px">Allocated: 0</span>
<span class="so" style="top:682px">Store: <em>Kiev</em></span>
<div class="rw" style="top:711px"></div><div class="st" style="top:742px"></div>
<div class="cbr" style="top:718px"></div>
<div class="vr" style="left:1209px;top:711px"></div><div class="vr" style="left:1344px;top:711px"></div><div class="vr" style="left:1444px;top:711px"></div><div class="vr" style="left:1524px;top:711px"></div><div class="vr" style="left:1604px;top:711px"></div><div class="vr" style="left:1684px;top:711px"></div><div class="vr" style="left:1764px;top:711px"></div><div class="vr" style="left:1834px;top:711px"></div>
<span class="lk" style="top:719px">TO-0000264</span><span class="q" style="top:719px">6</span><span class="co" style="top:718px">0</span><i class="tri" style="top:724px"></i>
<span class="sta" style="top:712px;color:#ee3b33">Check<br>Stock</span>

<!-- group 6 -->
<span class="ti" style="top:768px">000000</span>
<span class="su" style="top:789px;left:1190px">Ordered: 6 ea</span><span class="su" style="top:789px;left:1292px">Available: 0 ea</span><span class="su" style="top:789px;left:1383px">Incoming PO: 0 ea</span><span class="su" style="top:789px;left:1496px">Allocated: 0 ea</span>
<span class="so" style="top:787px">Store: <em>Kiev</em></span>
<div class="rw" style="top:815px"></div><div class="st" style="top:846px"></div>
<div class="cbr" style="top:822px"></div>
<div class="vr" style="left:1209px;top:815px"></div><div class="vr" style="left:1344px;top:815px"></div><div class="vr" style="left:1444px;top:815px"></div><div class="vr" style="left:1524px;top:815px"></div><div class="vr" style="left:1604px;top:815px"></div><div class="vr" style="left:1684px;top:815px"></div><div class="vr" style="left:1764px;top:815px"></div><div class="vr" style="left:1834px;top:815px"></div>
<span class="lk" style="top:823px">TO-0000264</span><span class="q" style="top:823px">6</span><span class="co" style="top:822px">8.064</span><i class="tri" style="top:828px"></i>
<span class="sta" style="top:816px;color:#ee3b33">Check<br>Stock</span>

<!-- group 7 -->
<span class="ti" style="top:872px">0317</span>
<span class="su" style="top:893px;left:1190px">Ordered: 96 ea</span><span class="su" style="top:893px;left:1298px">Available: 7 ea</span><span class="su" style="top:893px;left:1389px">Incoming PO: 0 ea</span><span class="su" style="top:893px;left:1502px">Allocated: 0 ea</span>
<span class="so" style="top:891px">Store: <em>Spring Valley</em></span>
<div class="rw" style="top:919px"></div><div class="st" style="top:950px"></div>
<div class="cbr" style="top:926px"></div>
<div class="vr" style="left:1209px;top:919px"></div><div class="vr" style="left:1344px;top:919px"></div><div class="vr" style="left:1444px;top:919px"></div><div class="vr" style="left:1524px;top:919px"></div><div class="vr" style="left:1604px;top:919px"></div><div class="vr" style="left:1684px;top:919px"></div><div class="vr" style="left:1764px;top:919px"></div><div class="vr" style="left:1834px;top:919px"></div>
<span class="lk" style="top:927px">TO-0000265</span><span class="q" style="top:927px">96</span><span class="co" style="top:926px">4.744</span><span class="q" style="top:927px;left:1773px">Default</span><i class="tri" style="top:932px"></i>
<span class="sta" style="top:920px;color:#ee3b33">Check<br>Stock</span>

<span class="ti" style="top:977px">test stock</span>

<!-- footer -->
<div style="position:absolute;left:1171px;top:984px;width:749px;height:56px;background:#fff"></div>
<div style="position:absolute;left:1166px;top:982px;width:749px;height:51px;border:4px solid #f4534a;box-shadow:0 0 3px rgba(0,0,0,.55),inset 0 0 3px rgba(0,0,0,.35)"></div>
<div style="position:absolute;left:1179px;top:999px;width:75px;height:25px;background:#eeeeee;color:#0e5f90;font-size:11px;line-height:27px;text-align:center">CANCEL</div>
<div style="position:absolute;left:1677px;top:999px;width:104px;height:25px;background:#00619a;color:#f2f6f9;font-size:10.800px;line-height:27px;text-align:center">SAVE &amp; PRINT</div>
<div style="position:absolute;left:1791px;top:999px;width:120px;height:25px;background:#00619a;color:#f2f6f9;font-size:10.600px;line-height:27px;text-align:center">SAVE &amp; PROCESS</div>

</body></html>
